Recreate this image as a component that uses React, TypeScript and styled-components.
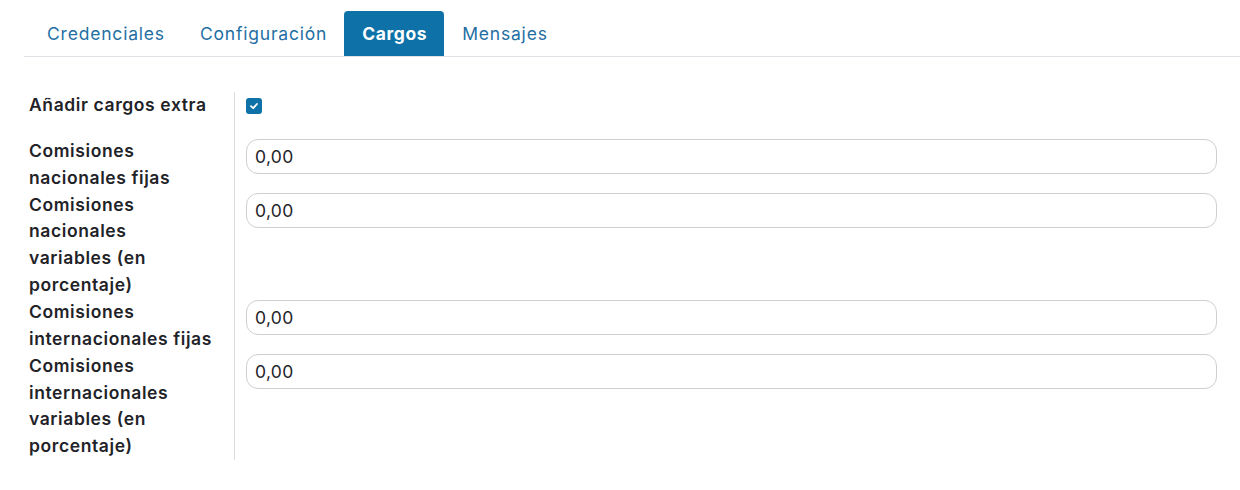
import React from "react";
import styled, { createGlobalStyle } from "styled-components";

const Global = createGlobalStyle`
  html, body { margin: 0; padding: 0; background: #fff; }
  body { font-family: "Inter", "Noto Sans", sans-serif; color: #1f2328; }
  * { box-sizing: border-box; }
`;

const Page = styled.div`
  padding: 11px 0 0 24px;
`;

const TabBar = styled.div`
  display: flex;
  border-bottom: 1px solid #dee2e6;
  padding-left: 5px;
  height: 46px;
`;

const Tab = styled.div<{ $active?: boolean }>`
  height: 45px;
  padding: 0 17px 0 18px;
  display: flex;
  align-items: center;
  font-size: 17.5px;
  letter-spacing: ${(p) => (p.$active ? "0.6px" : "0.8px")};
  font-weight: ${(p) => (p.$active ? 700 : 400)};
  color: ${(p) => (p.$active ? "#ffffff" : "#1f6fa3")};
  background: ${(p) => (p.$active ? "#0e72a8" : "transparent")};
  border-radius: 4px 4px 0 0;
  margin-bottom: -1px;
`;

const Form = styled.div`
  display: grid;
  grid-template-columns: 205px 1fr;
  margin-top: 35px;
  padding-left: 5px;
  margin-right: 23px;
`;

const Label = styled.div<{ $h?: number }>`
  font-size: 17.5px;
  font-weight: 600;
  letter-spacing: 0.6px;
  line-height: 26.8px;
  color: #1f2328;
  min-height: ${(p) => (p.$h ? `${p.$h}px` : "auto")};
`;

const Cell = styled.div`
  border-left: 1px solid #dcdcdc;
  padding-left: 11px;
`;

const CheckCell = styled(Cell)`
  padding-top: 6px;
`;

const Check = styled.div`
  width: 16px;
  height: 16px;
  border-radius: 3px;
  background: #0e72a8;
  display: flex;
  align-items: center;
  justify-content: center;
`;

const Input = styled.div`
  height: 35px;
  border: 1px solid #cfcfcf;
  border-radius: 12px;
  padding: 0 8px;
  display: flex;
  align-items: center;
  font-size: 17.5px;
  letter-spacing: 0.3px;
  color: #1f2328;
  margin-top: 1px;
`;

const rows: { lines: string[]; h: number }[] = [
  { lines: ["Comisiones", "nacionales fijas"], h: 53 },
  { lines: ["Comisiones", "nacionales", "variables (en", "porcentaje)"], h: 107 },
  { lines: ["Comisiones", "internacionales fijas"], h: 54 },
  { lines: ["Comisiones", "internacionales", "variables (en", "porcentaje)"], h: 107 },
];

export default function App() {
  return (
    <Page>
      <Global />
      <TabBar>
        <Tab>Credenciales</Tab>
        <Tab>Configuración</Tab>
        <Tab $active>Cargos</Tab>
        <Tab>Mensajes</Tab>
      </TabBar>
      <Form>
        <Label $h={46}>Añadir cargos extra</Label>
        <CheckCell>
          <Check>
            <svg width="10" height="10" viewBox="0 0 10 10">
              <path d="M2 5.2 L4.2 7.2 L8 3" stroke="#fff" strokeWidth="1.8" fill="none" strokeLinecap="round" strokeLinejoin="round" />
            </svg>
          </Check>
        </CheckCell>
        {rows.map((r, i) => (
          <React.Fragment key={i}>
            <Label $h={r.h}>
              {r.lines.map((l, j) => (
                <React.Fragment key={j}>
                  {l}
                  {j < r.lines.length - 1 && <br />}
                </React.Fragment>
              ))}
            </Label>
            <Cell>
              <Input>0,00</Input>
            </Cell>
          </React.Fragment>
        ))}
      </Form>
    </Page>
  );
}
